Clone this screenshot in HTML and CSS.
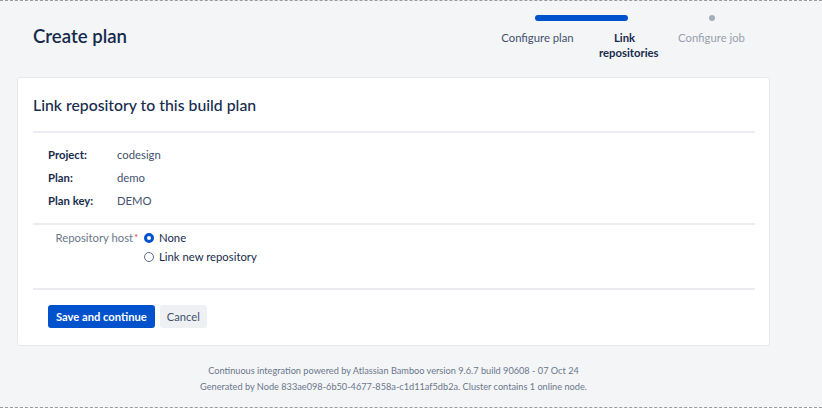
FILE: index.html
```html
<!DOCTYPE html>
<html lang="en">
<head>
<meta charset="utf-8">
<title>Create plan</title>
<link rel="stylesheet" href="styles.css">
</head>
<body>
<div class="page">
  <header class="page-header">
    <h1 class="page-title">Create plan</h1>
    <nav class="tracker">
      <div class="track">
        <span class="track-bar"></span>
        <span class="track-dot"></span>
      </div>
      <div class="steps">
        <div class="step step-done">Configure plan</div>
        <div class="step step-current">Link repositories</div>
        <div class="step step-todo">Configure job</div>
      </div>
    </nav>
  </header>

  <main class="card">
    <h2 class="card-title">Link repository to this build plan</h2>
    <hr class="divider">
    <dl class="details">
      <div class="detail-row"><dt>Project:</dt><dd>codesign</dd></div>
      <div class="detail-row"><dt>Plan:</dt><dd>demo</dd></div>
      <div class="detail-row"><dt>Plan key:</dt><dd>DEMO</dd></div>
    </dl>
    <hr class="divider">
    <div class="field">
      <div class="field-label">Repository host<span class="req">*</span></div>
      <div class="radios">
        <label class="radio"><span class="radio-dot checked"></span>None</label>
        <label class="radio"><span class="radio-dot"></span>Link new repository</label>
      </div>
    </div>
    <hr class="divider">
    <div class="actions">
      <button class="btn btn-primary">Save and continue</button>
      <button class="btn btn-subtle">Cancel</button>
    </div>
  </main>

  <footer class="footer">
    <p>Continuous integration powered by Atlassian Bamboo version 9.6.7 build 90608 - 07 Oct 24</p>
    <p>Generated by Node 833ae098-6b50-4677-858a-c1d11af5db2a. Cluster contains 1 online node.</p>
  </footer>
</div>
</body>
</html>
```
FILE: styles.css
```css
* { box-sizing: border-box; }

html, body {
  margin: 0;
  padding: 0;
  overflow: hidden;
}

body {
  background: #f4f5f7;
  font-family: "Lato", "Liberation Sans", sans-serif;
  color: #172b4d;
  border-top: 1px dashed #9a9a9a;
  border-bottom: 1px dashed #9a9a9a;
  height: 408px;
}

.page {
  width: 787px;
  padding: 0 17px;
  display: flex;
  flex-direction: column;
}

.page-header {
  display: flex;
  justify-content: space-between;
  align-items: flex-start;
  height: 76px;
  padding: 0 15px 0 16px;
}

.page-title {
  margin: 24px 0 0;
  font-size: 18.6px;
  line-height: 22px;
  font-weight: 600;
  color: #172b4d;
}

.tracker {
  width: 261px;
  padding-top: 14px;
}

.track {
  display: grid;
  grid-template-columns: repeat(6, 1fr);
  align-items: center;
  height: 6px;
}

.track-bar {
  grid-column: 2 / 4;
  height: 6px;
  margin: 0 -3px;
  border-radius: 3px;
  background: #0052cc;
}

.track-dot {
  grid-column: 5 / 7;
  justify-self: center;
  width: 6px;
  height: 6px;
  border-radius: 50%;
  background: #a5adba;
}

.steps {
  display: flex;
  margin-top: 9px;
}

.step {
  width: 87px;
  text-align: center;
  font-size: 11.3px;
  line-height: 15px;
  padding: 0 2px;
}

.step-done { color: #42526e; }
.step-current { color: #172b4d; font-weight: 700; padding: 0 18px; }
.step-todo { color: #97a0af; }

.card {
  background: #fff;
  border: 1px solid #e6e8ec;
  border-radius: 3px;
  padding: 16px 14px 17px 15px;
}

.card-title {
  margin: 0;
  font-size: 15.8px;
  line-height: 21px;
  font-weight: 500;
  color: #172b4d;
}

.divider {
  border: 0;
  height: 2px;
  background: #ebecf0;
  margin: 16px 0 0;
}

.details {
  margin: 10px 0 11px;
  padding-left: 15px;
}

.detail-row {
  display: flex;
  height: 23px;
  align-items: center;
  font-size: 11.3px;
}

.detail-row dt {
  width: 69px;
  font-weight: 700;
  color: #172b4d;
}

.detail-row dd {
  margin: 0;
  color: #42526e;
}

.field {
  display: flex;
  padding: 3px 0 22px;
  font-size: 11.3px;
}

.field + .divider { margin-top: 0; }
.details + .divider { margin-top: 0; }

.field-label {
  width: 111px;
  text-align: right;
  color: #6b778c;
  line-height: 19px;
  padding-right: 6px;
}

.req {
  color: #de350b;
  font-size: 9px;
  vertical-align: top;
  margin-left: 1px;
}

.radios {
  display: flex;
  flex-direction: column;
}

.radio {
  display: flex;
  align-items: center;
  height: 19px;
  color: #172b4d;
  font-size: 11.3px;
}

.radio-dot {
  width: 10px;
  height: 10px;
  border-radius: 50%;
  border: 1.5px solid #5e6c84;
  margin-right: 5px;
  background: #fff;
}

.radio-dot.checked {
  border: 3px solid #0052cc;
  background: #fff;
}

.actions {
  display: flex;
  gap: 5px;
  padding: 15px 0 0 15px;
}

.btn {
  font-family: inherit;
  font-size: 11.2px;
  height: 23px;
  border: 0;
  border-radius: 3px;
  padding: 0 7px;
  cursor: pointer;
}

.btn-primary {
  background: #0052cc;
  color: #fff;
  font-weight: 700;
  padding: 0 8px;
}

.btn-subtle {
  background: #eff0f3;
  color: #42526e;
}

.footer {
  text-align: center;
  color: #6b778c;
  font-size: 9.2px;
  line-height: 16px;
  padding-top: 17px;
}

.footer p { margin: 0; }
```
